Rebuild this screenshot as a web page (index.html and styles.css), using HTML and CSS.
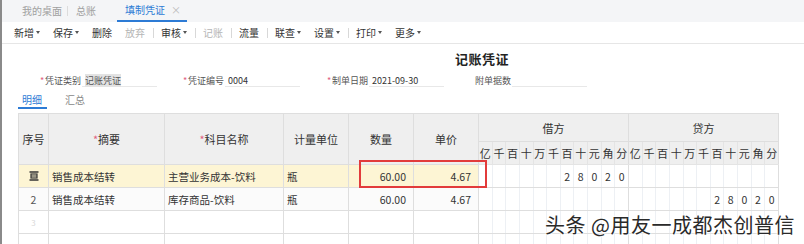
FILE: index.html
```html
<!DOCTYPE html>
<html lang="zh-CN">
<head>
  <meta charset="UTF-8" />
  <title>填制凭证</title>
  <link rel="stylesheet" href="styles.css">
</head>
<body>
  <div class="page">
    <div class="tabs">
      <span class="tab">我的桌面</span>
      <span class="tab-sep"></span>
      <span class="tab">总账</span>
      <span class="tab active">填制凭证 <span class="close">×</span></span>
    </div>

    <div class="toolbar">
      <span class="btn">新增<i class="caret"></i></span>
      <span class="btn">保存<i class="caret"></i></span>
      <span class="btn">删除</span>
      <span class="btn disabled">放弃</span>
      <span class="bar"></span>
      <span class="btn">审核<i class="caret"></i></span>
      <span class="bar"></span>
      <span class="btn disabled">记账</span>
      <span class="bar"></span>
      <span class="btn">流量</span>
      <span class="bar"></span>
      <span class="btn">联查<i class="caret"></i></span>
      <span class="btn">设置<i class="caret"></i></span>
      <span class="bar"></span>
      <span class="btn">打印<i class="caret"></i></span>
      <span class="btn">更多<i class="caret"></i></span>
    </div>

    <div class="title">记账凭证</div>

    <div class="fields">
      <div class="field f1"><span class="req">*</span><span class="lbl">凭证类别</span><span class="val"><em>记账凭证</em></span></div>
      <div class="field f2"><span class="req">*</span><span class="lbl">凭证编号</span><span class="val">0004</span></div>
      <div class="field f3"><span class="req">*</span><span class="lbl">制单日期</span><span class="val">2021-09-30</span></div>
      <div class="field f4"><span class="lbl">附单据数</span><span class="val"></span></div>
    </div>

    <div class="subtabs">
      <span class="subtab active">明细</span>
      <span class="subtab">汇总</span>
    </div>

    <div class="grid-wrap">
      <table class="grid">
        <colgroup>
          <col style="width:30px"><col style="width:116px"><col style="width:119px"><col style="width:65px"><col style="width:65px"><col style="width:65px">
          <col span="22" class="digit">
        </colgroup>
        <thead>
          <tr class="h1">
            <th rowspan="2">序号</th>
            <th rowspan="2"><b>*</b>摘要</th>
            <th rowspan="2"><b>*</b>科目名称</th>
            <th rowspan="2">计量单位</th>
            <th rowspan="2">数量</th>
            <th rowspan="2">单价</th>
            <th colspan="11">借方</th>
            <th colspan="11">贷方</th>
          </tr>
          <tr class="h2">
            <th>亿</th><th>千</th><th>百</th><th>十</th><th>万</th><th>千</th><th>百</th><th>十</th><th>元</th><th>角</th><th class="end">分</th>
            <th>亿</th><th>千</th><th>百</th><th>十</th><th>万</th><th>千</th><th>百</th><th>十</th><th>元</th><th>角</th><th class="end">分</th>
          </tr>
        </thead>
        <tbody>
          <tr class="sel">
            <td class="no">
              <svg width="10" height="10" viewBox="0 0 10 10"><path d="M0.5 1h9M0.5 9h9" stroke="#333" stroke-width="1.5"/><rect x="2" y="3" width="6" height="4" fill="none" stroke="#333" stroke-width="1.2"/><path d="M2 5h6" stroke="#333" stroke-width="1"/></svg>
            </td>
            <td>销售成本结转</td>
            <td>主营业务成本-饮料</td>
            <td>瓶</td>
            <td class="num">60.00</td>
            <td class="num">4.67</td>
            <td class="d"></td><td class="d"></td><td class="d"></td><td class="d"></td><td class="d"></td><td class="d"></td><td class="d">2</td><td class="d">8</td><td class="d">0</td><td class="d">2</td><td class="d end">0</td>
            <td class="d"></td><td class="d"></td><td class="d"></td><td class="d"></td><td class="d"></td><td class="d"></td><td class="d"></td><td class="d"></td><td class="d"></td><td class="d"></td><td class="d end"></td>
          </tr>
          <tr class="alt">
            <td class="no">2</td>
            <td>销售成本结转</td>
            <td>库存商品-饮料</td>
            <td>瓶</td>
            <td class="num">60.00</td>
            <td class="num">4.67</td>
            <td class="d"></td><td class="d"></td><td class="d"></td><td class="d"></td><td class="d"></td><td class="d"></td><td class="d"></td><td class="d"></td><td class="d"></td><td class="d"></td><td class="d end"></td>
            <td class="d"></td><td class="d"></td><td class="d"></td><td class="d"></td><td class="d"></td><td class="d"></td><td class="d">2</td><td class="d">8</td><td class="d">0</td><td class="d">2</td><td class="d end">0</td>
          </tr>
          <tr>
            <td class="no faint">3</td>
            <td></td><td></td><td></td><td></td><td></td>
            <td class="d"></td><td class="d"></td><td class="d"></td><td class="d"></td><td class="d"></td><td class="d"></td><td class="d"></td><td class="d"></td><td class="d"></td><td class="d"></td><td class="d end"></td>
            <td class="d"></td><td class="d"></td><td class="d"></td><td class="d"></td><td class="d"></td><td class="d"></td><td class="d"></td><td class="d"></td><td class="d"></td><td class="d"></td><td class="d end"></td>
          </tr>
          <tr>
            <td class="no"></td>
            <td></td><td></td><td></td><td></td><td></td>
            <td class="d"></td><td class="d"></td><td class="d"></td><td class="d"></td><td class="d"></td><td class="d"></td><td class="d"></td><td class="d"></td><td class="d"></td><td class="d"></td><td class="d end"></td>
            <td class="d"></td><td class="d"></td><td class="d"></td><td class="d"></td><td class="d"></td><td class="d"></td><td class="d"></td><td class="d"></td><td class="d"></td><td class="d"></td><td class="d end"></td>
          </tr>
        </tbody>
      </table>

      <!-- annotation box over qty / price -->
      <div class="mark"></div>
      <div class="watermark">头条 @用友一成都杰创普信</div>
    </div>
  </div>
</body>
</html>
```

FILE: styles.css
```css
html, body {
  margin: 0;
  height: 100%;
  overflow: hidden;
  background: #fff;
}

body {
  font-family: "Noto Sans CJK SC", "Liberation Sans", sans-serif;
  color: #333;
  font-size: 10px;
}

.page {
  height: 244px;
  border-left: 2px solid #8a8a8a;
  box-sizing: border-box;
  overflow: hidden;
}

/* top tabs */
.tabs {
  height: 22px;
  background: #f4f5f7;
  display: flex;
  align-items: stretch;
  padding-left: 20px;
  color: #a0a0a0;
}

.tab {
  display: flex;
  align-items: center;
  line-height: 1;
}

.tab-sep {
  width: 1px;
  height: 10px;
  background: #dcdcdc;
  align-self: center;
  margin: 0 8px 0 5px;
}

.tab.active {
  color: #2d7bd5;
  margin-left: 21px;
  padding: 0 6px 0 8px;
  border-bottom: 2px solid #2d7bd5;
  height: 20px;
  align-self: flex-end;
}

.tab .close {
  color: #bbb;
  margin-left: 6px;
}

/* toolbar */
.toolbar {
  height: 21px;
  border-bottom: 1px solid #e6e6e6;
  display: flex;
  align-items: center;
  padding-left: 12px;
  color: #333;
}

.btn {
  display: inline-flex;
  align-items: center;
  margin-right: 13px;
  line-height: 1;
}

.btn.disabled {
  color: #b5b5b5;
}

.caret {
  width: 0;
  height: 0;
  margin-left: 2px;
  border-left: 2.5px solid transparent;
  border-right: 2.5px solid transparent;
  border-top: 3px solid #555;
}

.bar {
  width: 1px;
  height: 10px;
  background: #d8d8d8;
  margin-right: 7px;
  margin-left: -5px;
}

/* title */
.title {
  padding-left: 453px;
  margin-top: 6px;
  height: 18px;
  font-size: 13px;
  font-weight: bold;
  color: #222;
  letter-spacing: 0.5px;
  line-height: 18px;
}

/* header fields */
.fields {
  display: flex;
  margin-top: 6px;
  height: 20px;
  padding-left: 38px;
}

.field {
  display: flex;
  align-items: flex-start;
  color: #555;
  font-size: 9px;
  line-height: 13px;
}

.req {
  color: #e0607e;
  width: 5px;
}

.lbl {
  width: 37px;
}

.val {
  display: block;
  height: 13px;
  width: 75px;
  border-bottom: 1px solid #e8e8e8;
  color: #333;
  padding-left: 3px;
  box-sizing: border-box;
}

.val em {
  font-style: normal;
  background: #e3e3e3;
  color: #555;
}

.f1 { width: 143px; }
.f2 { width: 144px; }
.f3 { width: 148px; }

/* sub tabs */
.subtabs {
  display: flex;
  padding-left: 16px;
  height: 19px;
  font-size: 10px;
}

.subtab {
  margin-right: 18px;
  color: #888;
  line-height: 12px;
  height: 13px;
}

.subtab.active {
  color: #2d7bd5;
  border-bottom: 2px solid #2d7bd5;
  padding: 0 5px 0 4px;
}

/* grid */
.grid-wrap {
  position: relative;
  margin-top: 0;
  padding-left: 16px;
}

.grid {
  border-collapse: collapse;
  table-layout: fixed;
  width: 760px;
  font-size: 11px;
}

.grid col.digit {
  width: 13.636px;
}

.grid th,
.grid td {
  border: 1px solid #dedede;
  padding: 0;
  overflow: hidden;
  white-space: nowrap;
}

.grid th {
  background: #efefef;
  font-weight: normal;
  color: #333;
  text-align: center;
}

.grid th b {
  color: #e0607e;
  font-weight: normal;
}

.grid .h1 th { height: 27px; }

.grid .h2 th {
  height: 22px;
  border-color: #e4e4e4;
}

.grid td {
  height: 22px;
  padding-left: 3px;
  font-size: 10.5px;
  color: #333;
}

.grid td.no {
  text-align: center;
  padding: 0;
  color: #555;
}

.grid td.no svg {
  display: block;
  margin: 0 auto;
}

.grid td.faint {
  color: #d8d8d8;
  font-size: 8px;
}

.grid td.num {
  text-align: right;
  padding-right: 7px;
  padding-left: 0;
}

.grid td.d {
  text-align: center;
  padding: 0;
  border-left-color: #edf0f4;
  border-right-color: #edf0f4;
  background: #fff;
}

.grid td.d.end,
.grid th.end {
  border-right-color: #dedede;
}

.grid tr.sel td {
  background: #fdf5d4;
}

.grid tr.sel td.d {
  background: #fff;
}

.grid tr.alt td {
  background: #fbfbfb;
}

.grid tr.alt td.d {
  background: #fff;
}

.mark {
  position: absolute;
  left: 357px;
  top: 47px;
  width: 124px;
  height: 24px;
  border: 2px solid #e23b3b;
}

.watermark {
  position: absolute;
  left: 543px;
  top: 102px;
  font-size: 20px;
  line-height: 1;
  color: #2a2a2a;
  letter-spacing: 0.5px;
  text-shadow: 0 0 2px #fff, 0 0 2px #fff, 0 0 3px #fff;
  white-space: nowrap;
}
```
